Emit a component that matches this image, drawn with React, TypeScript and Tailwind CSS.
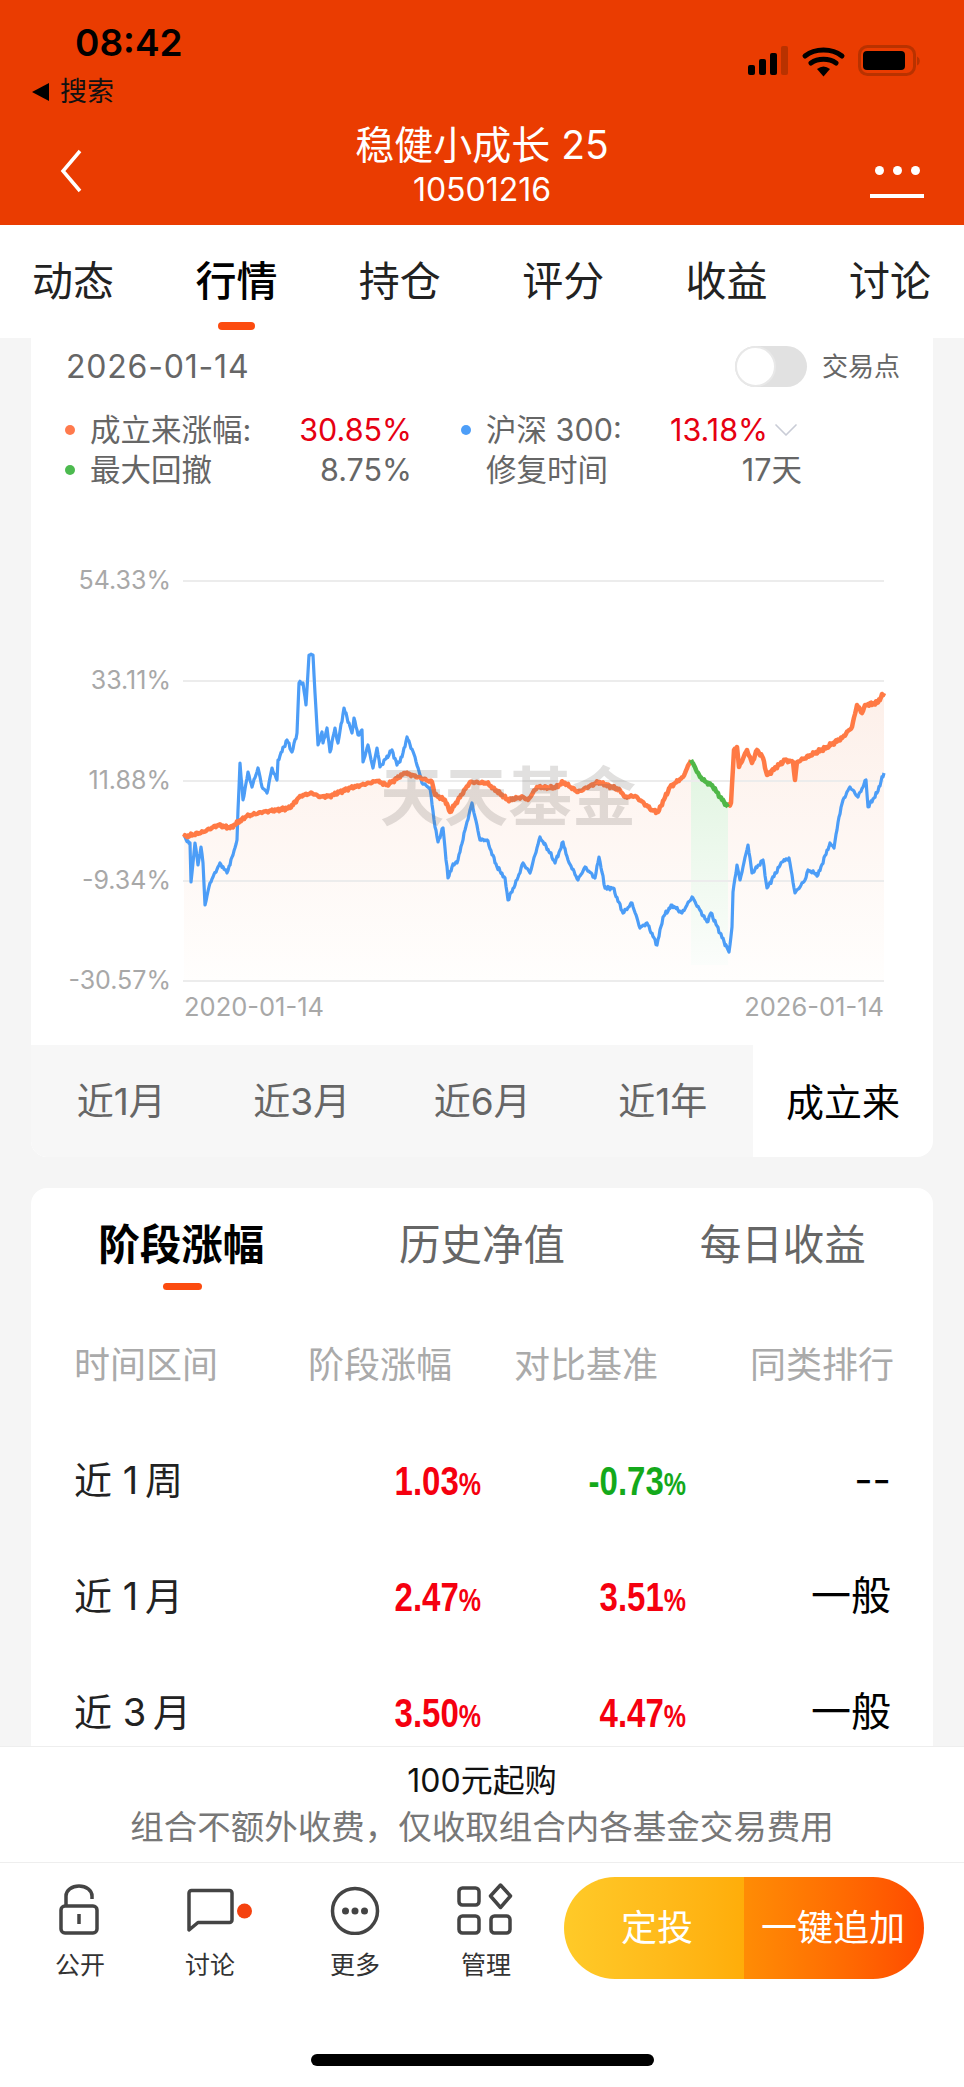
import { ChevronDown } from 'lucide-react';

type Pt = [number, number];

const periods = ['近1月', '近3月', '近6月', '近1年'];
const navTabs = ['动态', '行情', '持仓', '评分', '收益', '讨论'];

const rows = [
    { label: '近 1\u2009周', gain: '1.03', base: '-0.73', rank: '--' },
    { label: '近 1\u2009月', gain: '2.47', base: '3.51', rank: '一般' },
    { label: '近 3\u2009月', gain: '3.50', base: '4.47', rank: '一般' },
];

const grid = [
    { y: 581, label: '54.33%' },
    { y: 681, label: '33.11%' },
    { y: 781, label: '11.88%' },
    { y: 881, label: '-9.34%' },
    { y: 981, label: '-30.57%' },
];

// 沪深300
const benchmark: Pt[] = [
    [184, 838], [190, 843], [191, 882], [195, 843], [198, 865], [201, 847], [203, 863], [205, 905], [210, 883],
    [220, 863], [227, 873], [233, 855], [237, 840], [238, 810], [240, 763], [243, 800], [248, 772], [252, 787],
    [258, 768], [262, 787], [267, 793], [272, 768], [277, 780], [278, 760], [287, 740], [292, 752], [297, 733],
    [299, 683], [303, 683], [306, 705], [309, 655], [313, 655], [315, 693], [318, 745], [322, 732], [323, 743],
    [327, 728], [330, 752], [335, 728], [338, 743], [344, 708], [352, 733], [354, 718], [358, 735], [362, 730],
    [363, 762], [368, 745], [373, 768], [377, 748], [380, 767], [392, 750], [397, 765], [402, 757], [407, 737],
    [415, 757], [422, 783], [430, 788], [435, 827], [438, 842], [443, 828], [448, 878], [452, 867], [458, 860],
    [465, 830], [472, 803], [480, 840], [487, 840], [497, 867], [505, 878], [508, 900], [517, 880], [523, 863],
    [530, 873], [540, 837], [550, 853], [555, 863], [563, 842], [568, 860], [578, 880], [585, 867], [595, 878],
    [599, 857], [605, 888], [613, 888], [623, 913], [632, 903], [640, 928], [647, 923], [657, 945], [663, 917],
    [672, 905], [682, 913], [692, 897], [707, 922], [711, 913], [720, 933], [729, 952], [732, 927], [733, 892],
    [737, 865], [740, 880], [743, 867], [748, 845], [752, 873], [763, 860], [767, 888], [782, 862], [789, 858],
    [795, 893], [805, 880], [808, 870], [818, 875], [830, 843], [834, 848], [839, 817], [843, 800], [850, 787],
    [858, 797], [866, 780], [868, 807], [877, 793], [884, 773],
];

// 成立来涨幅, before and after the drawdown stretch
const fundBefore: Pt[] = [
    [184, 837], [203, 832], [218, 825], [230, 828], [247, 816], [263, 812], [290, 808], [300, 796], [312, 793],
    [320, 797], [330, 796], [350, 788], [377, 781], [387, 785], [405, 773], [418, 777], [432, 782], [435, 795],
    [445, 800], [450, 812], [470, 782], [487, 783], [493, 788], [508, 800], [523, 797], [528, 800], [537, 787],
    [555, 788], [563, 782], [578, 792], [598, 782], [620, 790], [625, 797], [635, 796], [652, 810], [658, 812],
    [670, 787], [683, 777], [691, 760],
];
const drawdown: Pt[] = [[691, 760], [700, 777], [706, 782], [712, 785], [720, 797], [728, 807]];
const fundAfter: Pt[] = [
    [728, 807], [731, 803], [734, 750], [737, 747], [739, 767], [747, 750], [752, 763], [757, 750], [763, 758],
    [767, 775], [785, 760], [793, 762], [795, 780], [797, 762], [827, 747], [842, 738], [852, 727], [857, 705],
    [862, 713], [865, 705], [877, 703], [884, 693],
];

const wiggle = (x: number, amp: number) =>
    (amp * (Math.sin(x * 2.3) + Math.sin(x * 4.1 + 1) + Math.sin(x * 1.1 + 2))) / 2;

const toPath = (pts: Pt[], amp: number) => {
    const out: string[] = [`M${pts[0][0]} ${pts[0][1]}`];
    for (let i = 1; i < pts.length; i++) {
        const [x0, y0] = pts[i - 1];
        const [x1, y1] = pts[i];
        const steps = Math.max(1, Math.floor(x1 - x0));
        for (let s = 1; s <= steps; s++) {
            const t = s / steps;
            const x = x0 + (x1 - x0) * t;
            const y = y0 + (y1 - y0) * t + (s === steps ? 0 : wiggle(x, amp));
            out.push(`L${x.toFixed(1)} ${y.toFixed(1)}`);
        }
    }
    return out.join('');
};

function Chart() {
    const fundLine = [...fundBefore, ...drawdown.slice(1), ...fundAfter.slice(1)];
    const areaPath = `${toPath(fundLine, 0)}L884 981L184 981Z`;
    const greenPath = `${toPath(drawdown, 0)}L728 965L691 965Z`;

    return (
        <svg width="902" height="470" viewBox="31 560 902 470" className="block">
            <defs>
                <linearGradient id="fundFill" gradientUnits="userSpaceOnUse" x1="0" y1="700" x2="0" y2="981">
                    <stop offset="0" stopColor="#fdf0ea" />
                    <stop offset="1" stopColor="#fffefd" />
                </linearGradient>
                <linearGradient id="dropFill" gradientUnits="userSpaceOnUse" x1="0" y1="770" x2="0" y2="965">
                    <stop offset="0" stopColor="#e2f5e2" />
                    <stop offset="1" stopColor="#fbfdfb" />
                </linearGradient>
            </defs>

            <path d={areaPath} fill="url(#fundFill)" />
            <path d={greenPath} fill="url(#dropFill)" />

            {grid.map((g) => (
                <g key={g.y}>
                    <line x1="183" x2="884" y1={g.y} y2={g.y} stroke="#ececec" strokeWidth="2" />
                    <text x="171" y={g.y + 8} textAnchor="end" fontSize="25" fill="#a8a8a8">
                        {g.label}
                    </text>
                </g>
            ))}

            <path d={toPath(benchmark, 1.5)} fill="none" stroke="#4c9df7" strokeWidth="3.2" strokeLinejoin="round" />
            <path d={toPath(fundBefore, 1.2)} fill="none" stroke="#ff7a45" strokeWidth="4.5" strokeLinejoin="round" />
            <path d={toPath(fundAfter, 1.4)} fill="none" stroke="#ff7a45" strokeWidth="4.5" strokeLinejoin="round" />
            <path d={toPath(drawdown, 1.1)} fill="none" stroke="#4fb748" strokeWidth="4.5" strokeLinejoin="round" />

            <text x="380" y="820" fontSize="64" fontWeight="700" fill="#6b645f" fillOpacity="0.2">
                天天基金
            </text>

            <text x="184" y="1016" fontSize="25.500" fill="#a8a8a8">
                2020-01-14
            </text>
            <text x="884" y="1016" textAnchor="end" fontSize="25.500" fill="#a8a8a8">
                2026-01-14
            </text>
        </svg>
    );
}

function StatusIcons() {
    return (
        <svg width="172" height="32" viewBox="0 0 172 32" className="block">
            {/* signal */}
            <rect x="0" y="20" width="7" height="10" rx="2" fill="#000" />
            <rect x="11" y="14" width="7" height="16" rx="2" fill="#000" />
            <rect x="22" y="8" width="7" height="22" rx="2" fill="#000" />
            <rect x="33" y="1" width="7" height="29" rx="2" fill="#b93200" />
            {/* wifi */}
            <path d="M57 11C67 3 84 3 94 11" fill="none" stroke="#000" strokeWidth="5" strokeLinecap="round" />
            <path d="M63 18C70 13 81 13 88 18" fill="none" stroke="#000" strokeWidth="5" strokeLinecap="round" />
            <path d="M69 24Q75.500 19 82 24L75.500 31.500Z" fill="#000" />
            {/* battery */}
            <rect x="111.500" y="1.500" width="55" height="28" rx="8" fill="none" stroke="#b93200" strokeWidth="3" />
            <rect x="115" y="6" width="42" height="19" rx="4" fill="#000" />
            <path d="M169 11.500a5 5 0 0 1 0 9z" fill="#b93200" />
        </svg>
    );
}

function LockIcon() {
    return (
        <svg width="90" height="52" viewBox="0 0 90 52" fill="none" stroke="#444" strokeWidth="3.500">
            <rect x="26" y="23" width="36" height="27" rx="4" />
            <path d="M31 23V13a13 10 0 0 1 26 0v3" />
            <path d="M44 31v10" />
        </svg>
    );
}

function ChatIcon() {
    return (
        <svg width="90" height="52" viewBox="0 0 90 52" fill="none" stroke="#444" strokeWidth="3.500" strokeLinejoin="round">
            <path d="M24 47V10a2.500 2.500 0 0 1 2.500-2.500h38a2.500 2.500 0 0 1 2.500 2.500v27a2.500 2.500 0 0 1-2.500 2.500H33z" />
            <circle cx="79.500" cy="28" r="7.500" fill="#f5420f" stroke="none" />
        </svg>
    );
}

function MoreIcon() {
    return (
        <svg width="90" height="52" viewBox="0 0 90 52" fill="none">
            <circle cx="45" cy="28" r="22.500" stroke="#444" strokeWidth="3.500" />
            <circle cx="35.500" cy="28" r="3.500" fill="#444" />
            <circle cx="45" cy="28" r="3.500" fill="#444" />
            <circle cx="54.500" cy="28" r="3.500" fill="#444" />
        </svg>
    );
}

function ManageIcon() {
    return (
        <svg width="90" height="52" viewBox="0 0 90 52" fill="none" stroke="#444" strokeWidth="3.500" strokeLinejoin="round">
            <rect x="18" y="5" width="20" height="17" rx="3.500" />
            <rect x="18" y="33" width="20" height="17" rx="3.500" />
            <rect x="50" y="33" width="19" height="17" rx="3.500" />
            <path d="M59.500 2L69.500 13L59.500 24.500L49.500 13Z" />
        </svg>
    );
}

const bottomActions = [
    { label: '公开', icon: <LockIcon />, width: 'w-[120px]' },
    { label: '讨论', icon: <ChatIcon />, width: 'w-[140px]' },
    { label: '更多', icon: <MoreIcon />, width: 'w-[150px]' },
    { label: '管理', icon: <ManageIcon />, width: 'w-[112px]' },
];

function Percent({ value, color }: { value: string; color: string }) {
    return (
        <span
            className={`inline-block scale-y-[1.25] font-['Liberation_Sans',sans-serif] text-[33px] leading-none font-bold ${color}`}
        >
            {value}
            <span className="text-[25px]">%</span>
        </span>
    );
}

export default function App() {
    return (
        <div className="flex h-[2087px] w-[964px] flex-col overflow-hidden bg-white font-['Inter','Noto_Sans_CJK_SC',sans-serif]">
            {/* Header */}
            <header className="h-[225px] shrink-0 bg-[#ea3c01]">
                <div className="flex h-[120px] justify-between">
                    <div className="pl-[32px]">
                        <div className="pl-[43px] pt-[20px] text-[37px] leading-[46px] font-semibold text-black">08:42</div>
                        <div className="mt-[6px] flex items-center gap-[11px] text-[27px] leading-[40px] text-[#111]">
                            <span className="h-0 w-0 border-y-[9px] border-r-[17px] border-y-transparent border-r-black" />
                            <span>搜索</span>
                        </div>
                    </div>
                    <div className="pr-[44px] pt-[45px]">
                        <StatusIcons />
                    </div>
                </div>
                <div className="flex items-start justify-between pl-[40px] pr-[40px]">
                    <div className="w-[54px] pl-[20px] pt-[29px]">
                        <svg width="22" height="44" viewBox="0 0 22 44" fill="none">
                            <path d="M20 2L3 22L20 42" stroke="#fff" strokeWidth="3.500" />
                        </svg>
                    </div>
                    <div className="flex flex-col items-center text-white">
                        <div className="text-[39px] leading-[50px]">稳健小成长 25</div>
                        <div className="text-[32px] leading-[40px]">10501216</div>
                    </div>
                    <div className="mt-[46px] flex w-[54px] flex-col items-center">
                        <div className="flex gap-[9px]">
                            <span className="h-[9px] w-[9px] rounded-full bg-white" />
                            <span className="h-[9px] w-[9px] rounded-full bg-white" />
                            <span className="h-[9px] w-[9px] rounded-full bg-white" />
                        </div>
                        <div className="mt-[19px] h-[4px] w-[54px] bg-white" />
                    </div>
                </div>
            </header>

            {/* Top tabs */}
            <nav className="flex h-[113px] shrink-0 justify-between bg-white pl-[33px] pr-[34px] pt-[28px]">
                {navTabs.map((tab) => (
                    <div key={tab} className="flex w-[80px] flex-col items-center">
                        <span
                            className={`whitespace-nowrap text-[41px] leading-[56px] ${tab === '行情' ? 'font-medium text-black' : 'text-[#222]'}`}
                        >
                            {tab}
                        </span>
                        {tab === '行情' && <span className="mt-[13px] h-[8px] w-[37px] rounded-full bg-[#fc4b0f]" />}
                    </div>
                ))}
            </nav>

            <main className="min-h-0 flex-1 overflow-hidden bg-[#f5f5f5] px-[31px]">
                {/* Chart card */}
                <section className="overflow-hidden rounded-b-[16px] bg-white">
                    <div className="flex items-center justify-between pl-[35px] pr-[33px] pt-[8px]">
                        <span className="text-[32px] leading-[41px] tracking-[0.8px] text-[#666]">2026-01-14</span>
                        <div className="flex items-center gap-[15px]">
                            <div className="h-[41px] w-[72px] rounded-full bg-[#e1e1e1]">
                                <div className="h-[41px] w-[41px] rounded-full border-2 border-[#e8e8e8] bg-white" />
                            </div>
                            <span className="text-[26px] leading-[41px] text-[#666]">交易点</span>
                        </div>
                    </div>

                    <div className="mt-[23px] grid grid-cols-[396px_341px] pl-[34px] text-[30.500px] leading-[40px] text-[#666]">
                        <div className="flex items-center pr-[49px]">
                            <span className="mr-[15px] h-[10px] w-[10px] rounded-full bg-[#ff7a4d]" />
                            <span>成立来涨幅:</span>
                            <span className="ml-auto text-[#e60012]">30.85%</span>
                        </div>
                        <div className="flex items-center">
                            <span className="mr-[15px] h-[10px] w-[10px] rounded-full bg-[#4d9ef8]" />
                            <span>沪深 300:</span>
                            <span className="ml-auto text-[#e60012]">13.18%</span>
                            <ChevronDown className="ml-[-2px] mr-[-4px] h-[40px] w-[40px] text-[#c9ccd6]" strokeWidth={1} />
                        </div>
                        <div className="flex items-center pr-[49px]">
                            <span className="mr-[15px] h-[10px] w-[10px] rounded-full bg-[#4cba4f]" />
                            <span>最大回撤</span>
                            <span className="ml-auto">8.75%</span>
                        </div>
                        <div className="flex items-center pl-[25px] pr-[-1px]">
                            <span>修复时间</span>
                            <span className="ml-auto">17天</span>
                        </div>
                    </div>

                    <div className="mt-[70px]">
                        <Chart />
                    </div>

                    <div className="mt-[15px] flex h-[112px] pt-0">
                        <div className="grid w-[722px] grid-cols-4 items-center rounded-bl-[16px] bg-[#f7f7f7] pt-[2px] text-center text-[#666]">
                            {periods.map((p) => (
                                <span key={p} className="text-[37px]">
                                    {p}
                                </span>
                            ))}
                        </div>
                        <div className="flex flex-1 items-center justify-center pt-[2px] text-[38px] text-black">成立来</div>
                    </div>
                </section>

                {/* Returns card */}
                <section className="mt-[31px] h-[600px] rounded-t-[16px] bg-white pt-[29px]">
                    <div className="grid grid-cols-3 text-center text-[41.500px] leading-[56px]">
                        <div className="flex flex-col items-center">
                            <span className="font-bold text-black">阶段涨幅</span>
                            <span className="ml-[3px] mt-[10px] h-[7px] w-[39px] rounded-full bg-[#fc4b0f]" />
                        </div>
                        <span className="text-[#666]">历史净值</span>
                        <span className="text-[#666]">每日收益</span>
                    </div>

                    <div className="mt-[50px] grid grid-cols-[234px_206px_236px_141px] whitespace-nowrap pl-[43px] pr-[42px] text-[36px] leading-[50px] text-[#aaa]">
                        <span>时间区间</span>
                        <span>阶段涨幅</span>
                        <span>对比基准</span>
                        <span>同类排行</span>
                    </div>

                    <div className="mt-[32px] pl-[43px] pr-[42px]">
                        {rows.map((r) => (
                            <div
                                key={r.label}
                                className="grid h-[116px] grid-cols-[1fr_133px_205px_205px] items-center text-right text-[38px] text-[#222]"
                            >
                                <span className="text-left">{r.label}</span>
                                <Percent value={r.gain} color="text-[#f5000f]" />
                                <Percent
                                    value={r.base}
                                    color={r.base.startsWith('-') ? 'text-[#14a91b]' : 'text-[#f5000f]'}
                                />
                                <span className="text-[40px] text-black">{r.rank}</span>
                            </div>
                        ))}
                    </div>
                </section>
            </main>

            {/* Bottom bar */}
            <footer className="h-[341px] shrink-0 border-t border-[#eeeeee] bg-white">
                <div className="border-b border-[#eeeeee] pb-[12px] pt-[11px] text-center">
                    <div className="text-[32px] leading-[46px] text-[#111]">100元起购</div>
                    <div className="text-[33.500px] leading-[46px] text-[#777]">组合不额外收费，仅收取组合内各基金交易费用</div>
                </div>
                <div className="flex pl-[20px] pt-[14px]">
                    <div className="flex w-[544px]">
                        {bottomActions.map((a) => (
                            <div key={a.label} className={`flex ${a.width} flex-col items-center pt-[6px]`}>
                                {a.icon}
                                <span className="mt-[15px] text-[25px] leading-[30px] text-[#333]">{a.label}</span>
                            </div>
                        ))}
                    </div>
                    <div className="flex h-[102px] w-[360px] overflow-hidden rounded-full text-[36px] text-white">
                        <div className="flex w-[180px] items-center justify-center bg-gradient-to-r from-[#ffca28] to-[#ffad09] pl-[6px]">
                            定投
                        </div>
                        <div className="flex flex-1 items-center justify-center bg-gradient-to-r from-[#ff8c05] to-[#ff4a00] pr-[2px]">
                            一键追加
                        </div>
                    </div>
                </div>
                <div className="mx-auto mt-[74px] h-[12px] w-[343px] rounded-full bg-black" />
            </footer>
        </div>
    );
}
